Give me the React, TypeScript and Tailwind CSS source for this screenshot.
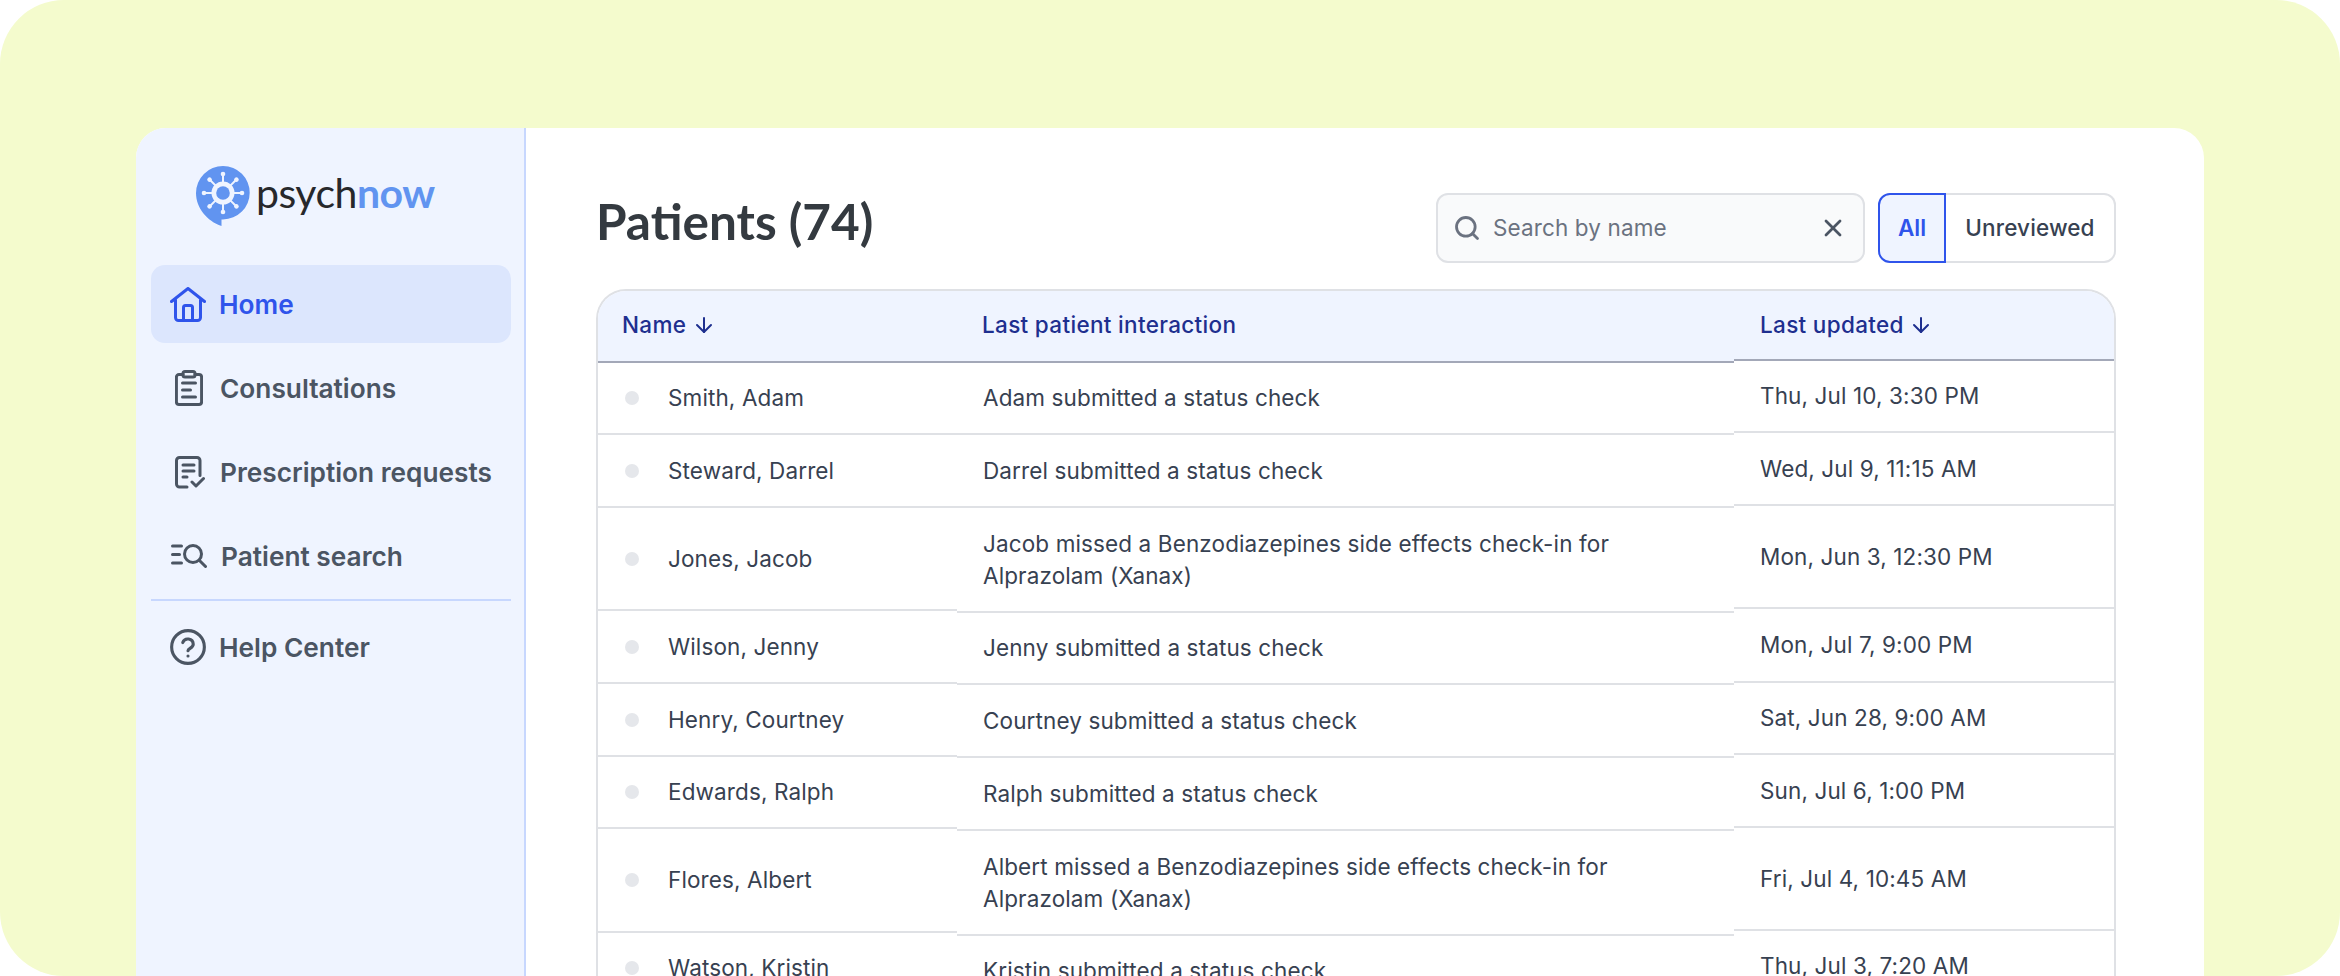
import { ArrowDown, Search, X } from "lucide-react";

// each column of the table has slightly different row heights in the design
const PATIENTS = [
  { name: "Smith, Adam", msg: "Adam submitted a status check", date: "Thu, Jul 10, 3:30 PM", h1: "h-[72px]", h2: "h-[72px]", h3: "h-[72px]" },
  { name: "Steward, Darrel", msg: "Darrel submitted a status check", date: "Wed, Jul 9, 11:15 AM", h1: "h-[73px]", h2: "h-[73px]", h3: "h-[73px]" },
  { name: "Jones, Jacob", msg: "Jacob missed a Benzodiazepines side effects check-in for Alprazolam (Xanax)", date: "Mon, Jun 3, 12:30 PM", h1: "h-[103px]", h2: "h-[105px]", h3: "h-[103px]" },
  { name: "Wilson, Jenny", msg: "Jenny submitted a status check", date: "Mon, Jul 7, 9:00 PM", h1: "h-[73px]", h2: "h-[72px]", h3: "h-[74px]" },
  { name: "Henry, Courtney", msg: "Courtney submitted a status check", date: "Sat, Jun 28, 9:00 AM", h1: "h-[73px]", h2: "h-[73px]", h3: "h-[72px]" },
  { name: "Edwards, Ralph", msg: "Ralph submitted a status check", date: "Sun, Jul 6, 1:00 PM", h1: "h-[72px]", h2: "h-[73px]", h3: "h-[73px]" },
  { name: "Flores, Albert", msg: "Albert missed a Benzodiazepines side effects check-in for Alprazolam (Xanax)", date: "Fri, Jul 4, 10:45 AM", h1: "h-[104px]", h2: "h-[105px]", h3: "h-[103px]" },
  { name: "Watson, Kristin", msg: "Kristin submitted a status check", date: "Thu, Jul 3, 7:20 AM", h1: "h-[72px]", h2: "h-[72px]", h3: "h-[72px]" },
];

function Logo() {
  const angles = [0, 45, 90, 135, 180, 225, 270, 315];
  return (
    <svg width="54" height="60" viewBox="0 0 54 60" className="shrink-0">
      <path d="M27 0a26.7 26.7 0 0 1 0 53.4l-1.5.2V60C11 55 0 42 0 27A27 27 0 0 1 27 0z" fill="#6194F0" />
      <g transform="translate(27 27)">
        {angles.map((a) => (
          <g key={a} transform={`rotate(${a})`}>
            <line x1="0" y1="-9" x2="0" y2="-19" stroke="#EFF4FF" strokeWidth="2" />
            <circle cx="0" cy="-19" r="2.3" fill="#EFF4FF" />
          </g>
        ))}
        <circle r="11.5" fill="#EFF4FF" />
        <circle r="6.8" fill="#6194F0" />
      </g>
    </svg>
  );
}

function HomeIcon() {
  return (
    <svg width="36" height="35" viewBox="0 0 36 35" fill="none" stroke="#2F54EB" strokeWidth="3" strokeLinecap="round" strokeLinejoin="round">
      <path d="M1.500 14.500 18 1.500l16.500 13" />
      <path d="M5.500 13v17.500a3 3 0 0 0 3 3h19a3 3 0 0 0 3-3V13" />
      <path d="M13.500 33.500V20.500a2 2 0 0 1 2-2h5a2 2 0 0 1 2 2v13" />
    </svg>
  );
}

function ClipboardIcon() {
  return (
    <svg width="28" height="36" viewBox="0 0 28 36" fill="none" stroke="#4B5563" strokeWidth="3" strokeLinecap="round" strokeLinejoin="round">
      <path d="M8 4.500H4a2.600 2.600 0 0 0-2.600 2.600v25A2.600 2.600 0 0 0 4 34.500h20a2.600 2.600 0 0 0 2.600-2.400v-25A2.600 2.600 0 0 0 24 4.500h-4" />
      <rect x="8" y="1.500" width="12" height="5.500" rx="2" />
      <path d="M7.500 13h13M7.500 20h8M7.500 27h13" />
    </svg>
  );
}

function PrescriptionIcon() {
  return (
    <svg width="30" height="33" viewBox="0 0 30 33" fill="none" stroke="#4B5563" strokeWidth="3" strokeLinecap="round" strokeLinejoin="round">
      <path d="M12 31H4.500a3 3 0 0 1-3-3V4.500a3 3 0 0 1 3-3H22a3 3 0 0 1 3 3v15" />
      <path d="M8 9h11M8 15h11M8 21h4" />
      <path d="m17 26 4 4 7.500-7.500" />
    </svg>
  );
}

function PatientSearchIcon() {
  return (
    <svg width="36" height="24" viewBox="0 0 36 24" fill="none" stroke="#4B5563" strokeWidth="3" strokeLinecap="round" strokeLinejoin="round">
      <path d="M1.500 2h9M1.500 10.500h7M1.500 19h9" />
      <circle cx="22" cy="10" r="8.500" />
      <path d="m28.500 16.500 6 6" />
    </svg>
  );
}

function HelpIcon() {
  return (
    <svg width="36" height="36" viewBox="1 1 22 22" fill="none" stroke="#4B5563" strokeWidth="1.900" strokeLinecap="round" strokeLinejoin="round">
      <circle cx="12" cy="12" r="10" />
      <path d="M8.800 9.300a3.300 3.300 0 0 1 6.400 1c0 2.200-3.200 2.700-3.200 4" />
      <path d="M12 17.500h.01" />
    </svg>
  );
}

export default function App() {
  return (
    <div className="w-[2340px] h-[976px] bg-white overflow-hidden font-['Inter',sans-serif]">
      <div className="h-full rounded-[64px] bg-[#F4FBCD] pt-[128px] px-[136px]">
        <div className="h-full flex rounded-t-[30px] overflow-hidden bg-white">
          {/* Sidebar */}
          <aside className="w-[390px] shrink-0 bg-[#EFF4FF] border-r-2 border-[#C7D7FE] pl-[15px] pr-[13px]">
            <div className="flex items-start gap-[6px] pt-[38px] pl-[45px] h-[137px]">
              <Logo />
              <div className="font-['Lato',sans-serif] text-[41px] leading-[50px] mt-[2px] tracking-[-0.5px] text-[#27282B]">
                psych<span className="font-bold text-[#6194F0]">now</span>
              </div>
            </div>
            <nav className="flex flex-col gap-[6px] text-[26.25px] font-semibold text-[#4B5563]">
              <a className="h-[78px] flex items-center gap-[13px] pl-[19px] rounded-[14px] bg-[#DCE6FD] text-[#2F54EB]">
                <HomeIcon />
                <span className="mt-[1px]">Home</span>
              </a>
              <a className="h-[78px] flex items-center gap-[17px] pl-[24px]">
                <ClipboardIcon />
                <span className="mt-[1px]">Consultations</span>
              </a>
              <a className="h-[78px] flex items-center gap-[15px] pl-[24px]">
                <PrescriptionIcon />
                <span className="mt-[1px]">Prescription requests</span>
              </a>
              <a className="h-[78px] flex items-center gap-[14px] pl-[20px]">
                <PatientSearchIcon />
                <span className="mt-[1px]">Patient search</span>
              </a>
            </nav>
            <div className="mt-[4px] h-[2px] bg-[#C7D7FE]" />
            <div className="mt-[26px] flex items-center gap-[13px] pl-[19px] text-[26.25px] font-semibold text-[#4B5563]">
              <HelpIcon />
              <span className="mt-[1px]">Help Center</span>
            </div>
          </aside>

          {/* Main */}
          <main className="flex-1 min-w-0 pt-[65px] pl-[70px] pr-[88px]">
            <div className="flex items-center justify-between h-[70px]">
              <h1 className="font-['Lato',sans-serif] font-bold text-[49.5px] leading-none text-[#343A40] mb-[12px]">
                Patients (74)
              </h1>
              <div className="flex items-stretch h-[70px]">
                <div className="w-[429px] flex items-center rounded-[12px] border-2 border-[#DFE1E5] bg-[#F9FAFB] pl-[15px] pr-[16px]">
                  <Search size={28} strokeWidth={2.4} className="text-[#6B7280] shrink-0" />
                  <span className="ml-[12px] flex-1 text-[22.5px] tracking-[0.12px] text-[#6B7280]">Search by name</span>
                  <X size={28} strokeWidth={2.4} className="text-[#4B5563] shrink-0" />
                </div>
                <div className="ml-[13px] w-[68px] flex items-center justify-center rounded-l-[12px] border-2 border-[#2F54EB] bg-[#EFF4FF] text-[22.5px] font-semibold text-[#2F54EB]">
                  All
                </div>
                <div className="w-[170px] flex items-center justify-center rounded-r-[12px] border-2 border-l-0 border-[#DFE1E5] text-[22.5px] tracking-[0.12px] font-medium text-[#374151]">
                  Unreviewed
                </div>
              </div>
            </div>

            {/* Table */}
            <div className="mt-[26px] flex rounded-t-[30px] border-2 border-b-0 border-[#DFE1E5] overflow-hidden text-[22.5px] tracking-[0.12px] leading-[32px] text-[#374151]">
              <div className="w-[359px] shrink-0">
                <div className="h-[72px] flex items-center gap-[6px] pl-[24px] pb-[2px] bg-[#EFF4FF] border-b-2 border-[#A3A8B8] font-medium tracking-[0.32px] text-[#1E2F8F]">
                  <span>Name</span>
                  <ArrowDown size={24} strokeWidth={2} />
                </div>
                {PATIENTS.map((p) => (
                  <div key={p.name} className={`${p.h1} flex items-center pl-[27px] border-b-2 border-[#DFE1E5]`}>
                    <span className="w-[14px] h-[14px] rounded-full bg-[#E5E7EB] shrink-0" />
                    <span className="ml-[29px]">{p.name}</span>
                  </div>
                ))}
              </div>
              <div className="w-[777px] shrink-0">
                <div className="h-[72px] flex items-center pl-[25px] pb-[2px] bg-[#EFF4FF] border-b-2 border-[#A3A8B8] font-medium tracking-[0.32px] text-[#1E2F8F]">
                  Last patient interaction
                </div>
                {PATIENTS.map((p) => (
                  <div key={p.name} className={`${p.h2} flex items-center pl-[26px] border-b-2 border-[#DFE1E5]`}>
                    <span className="max-w-[660px]">{p.msg}</span>
                  </div>
                ))}
              </div>
              <div className="flex-1 min-w-0">
                <div className="h-[70px] flex items-center gap-[5px] pl-[26px] bg-[#EFF4FF] border-b-2 border-[#A3A8B8] font-medium tracking-[0.32px] text-[#1E2F8F]">
                  <span>Last updated</span>
                  <ArrowDown size={24} strokeWidth={2} />
                </div>
                {PATIENTS.map((p) => (
                  <div key={p.name} className={`${p.h3} flex items-center pl-[26px] border-b-2 border-[#DFE1E5]`}>
                    {p.date}
                  </div>
                ))}
              </div>
            </div>
          </main>
        </div>
      </div>
    </div>
  );
}
